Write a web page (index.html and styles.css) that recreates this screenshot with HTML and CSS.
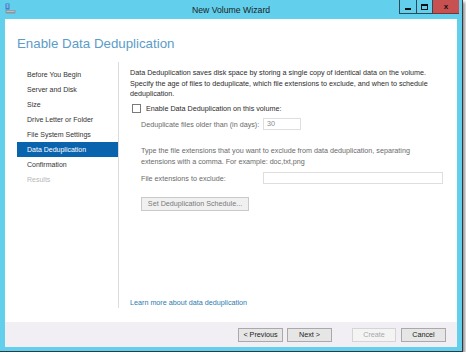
FILE: index.html
```html
<!DOCTYPE html>
<html lang="en">
<head>
    <meta charset="UTF-8">
    <title>New Volume Wizard</title>
    <link rel="stylesheet" href="styles.css">
</head>
<body>
    <div class="window">
        <div class="titlebar">
            <div class="app-icon">
                <svg width="11" height="11" viewBox="0 0 11 11">
                    <rect x="0.5" y="0.5" width="4" height="6" fill="#3a7fc8"/>
                    <rect x="1.5" y="1.5" width="2" height="1" fill="#cfe3f7"/>
                    <rect x="1.5" y="3.5" width="2" height="1" fill="#cfe3f7"/>
                    <rect x="0.5" y="7" width="10" height="3.5" rx="0.8" fill="#8c949c"/>
                    <rect x="1.5" y="7.8" width="8" height="1" fill="#c4c9ce"/>
                </svg>
            </div>
            <div class="title">New Volume Wizard</div>
            <div class="controls">
                <div class="ctl ctl-min"><span></span></div>
                <div class="ctl ctl-max"><span></span></div>
                <div class="ctl ctl-close">x</div>
            </div>
        </div>

        <div class="client">
            <div class="header">Enable Data Deduplication</div>

            <div class="body">
                <ul class="nav">
                    <li>Before You Begin</li>
                    <li>Server and Disk</li>
                    <li>Size</li>
                    <li>Drive Letter or Folder</li>
                    <li>File System Settings</li>
                    <li class="active">Data Deduplication</li>
                    <li>Confirmation</li>
                    <li class="disabled">Results</li>
                </ul>

                <div class="main">
                    <p class="desc">Data Deduplication saves disk space by storing a single copy of identical data on the volume. Specify the age of files to deduplicate, which file extensions to exclude, and when to schedule deduplication.</p>

                    <label class="check-row">
                        <span class="checkbox"></span>
                        Enable Data Deduplication on this volume:
                    </label>

                    <div class="field-row age-row">
                        <span class="field-label">Deduplicate files older than (in days):</span>
                        <span class="textbox age-box">30</span>
                    </div>

                    <p class="hint">Type the file extensions that you want to exclude from data deduplication, separating extensions with a comma. For example: doc,txt,png</p>

                    <div class="field-row ext-row">
                        <span class="field-label">File extensions to exclude:</span>
                        <span class="textbox ext-box"></span>
                    </div>

                    <div class="schedule-btn">Set Deduplication Schedule...</div>

                    <a class="learn-more" href="#">Learn more about data deduplication</a>
                </div>
            </div>

            <div class="footer">
                <div class="btn">&lt; Previous</div>
                <div class="btn">Next &gt;</div>
                <div class="btn btn-disabled btn-create">Create</div>
                <div class="btn btn-cancel">Cancel</div>
            </div>
        </div>
    </div>
</body>
</html>
```

FILE: styles.css
```css
body {
    margin: 0;
    background: #ffffff;
    font-family: "Liberation Sans", Arial, sans-serif;
    font-size: 7.2px;
    color: #2b2b2b;
}

.window {
    width: 463px;
    height: 352px;
    box-sizing: border-box;
    display: flex;
    flex-direction: column;
    background: #62cfec;
    border-right: 1px solid #2e3b40;
    border-bottom: 1px solid #2e3b40;
    box-shadow: 2px 2px 3px rgba(0, 0, 0, 0.45);
}

/* title bar */

.titlebar {
    height: 19px;
    display: grid;
    grid-template-columns: 1fr auto 1fr;
    align-items: start;
}

.app-icon {
    padding: 3px 0 0 5px;
    line-height: 0;
}

.title {
    font-size: 8.7px;
    line-height: 20px;
    color: #1e1e1e;
}

.controls {
    display: flex;
    justify-content: flex-end;
    margin-right: 3px;
}

.ctl {
    height: 14px;
    box-sizing: border-box;
    display: flex;
    align-items: center;
    justify-content: center;
}

.ctl-min,
.ctl-max {
    width: 17px;
    border: 1px solid #2f4a55;
    border-top: none;
    border-right: none;
}

.ctl-max {
    width: 16px;
}

.ctl-min span {
    width: 6px;
    height: 2px;
    background: #111;
    margin-top: 4px;
}

.ctl-max span {
    width: 5px;
    height: 3px;
    border: 1px solid #111;
    border-top-width: 2px;
}

.ctl-close {
    width: 27px;
    background: #c75050;
    border-left: 1px solid #2f4a55;
    border-bottom: 1px solid #7a3434;
    color: #111;
    font-weight: bold;
    font-size: 8px;
    line-height: 12px;
}

/* client area */

.client {
    flex: 1;
    margin: 0 5px 4px;
    display: flex;
    flex-direction: column;
    background: #ffffff;
}

.header {
    height: 43px;
    box-sizing: border-box;
    padding: 17px 0 0 12px;
    font-size: 13.3px;
    line-height: 16px;
    color: #5b9cc8;
}

.body {
    flex: 1;
    display: flex;
    padding-bottom: 14px;
}

.nav {
    list-style: none;
    margin: 0 0 0 12px;
    padding: 5px 0 0;
    width: 101px;
    border-right: 1px solid #dcdcdc;
}

.nav li {
    height: 15px;
    line-height: 15px;
    padding-left: 10px;
    font-size: 7px;
    color: #333;
}

.nav li.active {
    background: #0a64ad;
    color: #ffffff;
}

.nav li.disabled {
    color: #b8b8b8;
}

.main {
    flex: 1;
    display: flex;
    flex-direction: column;
    padding: 6px 12px 0 11px;
}

.desc {
    margin: 0;
    padding-right: 12px;
    line-height: 10.5px;
}

.check-row {
    display: flex;
    align-items: center;
    margin-top: 3.5px;
    height: 10px;
    color: #2b2b2b;
}

.checkbox {
    width: 7px;
    height: 7px;
    border: 1px solid #7a7a7a;
    background: #fff;
    margin: 0 5px 0 2px;
}

.field-row {
    display: flex;
    align-items: center;
    height: 12px;
    padding-left: 11px;
    color: #6a6a6a;
}

.age-row {
    margin-top: 5px;
}

.field-label {
    width: 122px;
}

.textbox {
    height: 12px;
    box-sizing: border-box;
    border: 1px solid #dedede;
    padding-left: 3px;
    line-height: 10px;
    color: #8a8a8a;
}

.age-box {
    width: 38px;
}

.ext-box {
    width: 180px;
}

.hint {
    margin: 16px 0 0;
    padding: 0 20px 0 11px;
    line-height: 10.5px;
    color: #6a6a6a;
}

.ext-row {
    margin-top: 5px;
}

.schedule-btn {
    margin: 13px 0 0 11px;
    width: 108px;
    height: 14px;
    box-sizing: border-box;
    border: 1px solid #c9c9c9;
    background: #f0f0f0;
    color: #7a7a7a;
    text-align: center;
    line-height: 12px;
}

.learn-more {
    margin-top: auto;
    line-height: 10px;
    color: #2b7bb0;
    text-decoration: none;
}

/* footer */

.footer {
    height: 25px;
    box-sizing: border-box;
    display: flex;
    justify-content: flex-end;
    padding: 6px 11px 0 0;
    background: #f1eff3;
}

.btn {
    width: 45px;
    height: 14px;
    box-sizing: border-box;
    margin-left: 4px;
    border: 1px solid #a9a9a9;
    background: #e6e6e6;
    text-align: center;
    line-height: 12px;
    color: #222;
}

.btn-create {
    margin-left: 20px;
    width: 44px;
}

.btn-cancel {
    margin-left: 5px;
}

.btn-disabled {
    border-color: #d4d4d4;
    background: #f4f4f4;
    color: #a8a8a8;
}
```
